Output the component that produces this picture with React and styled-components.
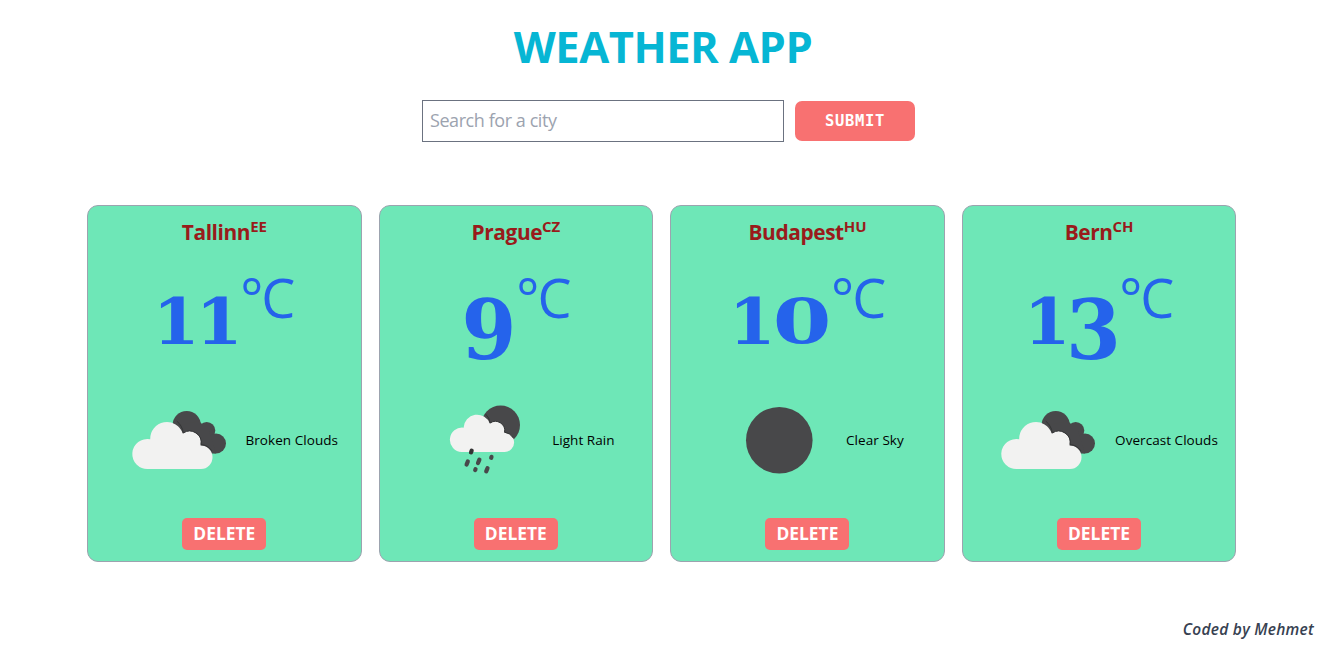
import React from "react";
import styled, { createGlobalStyle } from "styled-components";

const GlobalStyle = createGlobalStyle`
  *, *::before, *::after { box-sizing: border-box; }
  body {
    margin: 0;
    background: #fff;
    font-family: "Segoe UI", "Open Sans", "Noto Sans", sans-serif;
  }
`;

const Page = styled.div`
  height: 649px;
  padding: 19px 17px 0 0;
  display: flex;
  flex-direction: column;
  overflow: hidden;
`;

const Title = styled.h1`
  margin: 0;
  height: 56px;
  line-height: 56px;
  text-align: center;
  font-size: 43.5px;
  font-weight: 700;
  letter-spacing: -0.5px;
  color: #06b6d4;
  white-space: nowrap;
`;

const SearchForm = styled.form`
  display: flex;
  align-items: center;
  gap: 11px;
  height: 42px;
  margin: 25px 0 0 422px;
`;

const SearchInput = styled.input`
  width: 362px;
  height: 42px;
  padding: 0 7px 2px;
  border: 1px solid #6b7280;
  border-radius: 0;
  outline: none;
  font-family: inherit;
  font-size: 18px;
  letter-spacing: -0.43px;
  &::placeholder { color: #9ca3af; opacity: 1; }
`;

const SubmitButton = styled.button`
  width: 120px;
  height: 40px;
  padding: 0;
  border: 0;
  border-radius: 7px;
  background: #f87171;
  color: #fff;
  font-family: "DejaVu Sans Mono", monospace;
  font-size: 15.5px;
  font-weight: 700;
  letter-spacing: 0.67px;
`;

const CardGrid = styled.main`
  display: grid;
  grid-template-columns: repeat(4, 1fr);
  gap: 17px;
  width: 1149.3px;
  margin: 63px 0 0 87px;
`;

const Card = styled.article`
  height: 357px;
  display: flex;
  flex-direction: column;
  align-items: center;
  background: #6ee7b7;
  border: 1px solid #9ca3af;
  border-radius: 11px;
`;

const City = styled.h2`
  display: flex;
  margin: 10px 0 0;
  height: 32px;
  line-height: 32px;
  font-size: 20.9px;
  font-weight: 700;
  letter-spacing: -0.42px;
  color: #991b1b;
`;

const Country = styled.span`
  margin: -6px 0 0;
  font-size: 15px;
  font-weight: 700;
  letter-spacing: -0.1px;
`;

const Temperature = styled.div`
  display: flex;
  height: 109px;
  margin-top: 17px;
  color: #2563eb;
`;

const Digit = styled.span`
  display: flex;
  justify-content: center;
  width: ${(p) => p.$width}px;
  height: 100px;
  line-height: 100px;
  margin-top: ${(p) => p.$drop}px;
  font-family: "DejaVu Serif", serif;
  font-size: ${(p) => p.$size}px;
  font-weight: 700;
  transform: scaleX(${(p) => p.$stretch});
`;

const Unit = styled.span`
  height: 76px;
  margin: -6px 0 0;
  line-height: 76px;
  font-size: 54px;
  font-weight: 400;
  letter-spacing: -2px;
`;

const Conditions = styled.div`
  display: flex;
  align-items: center;
  height: 135px;
  margin-top: -1px;
`;

const Description = styled.span`
  margin-top: -2px;
  font-size: 13.5px;
  letter-spacing: 0.05px;
  color: #000;
  white-space: nowrap;
`;

const WeatherIcon = styled.svg`
  width: 135px;
  height: 135px;
  flex: none;
`;

const DeleteButton = styled.button`
  width: 84px;
  height: 32px;
  margin-top: 10px;
  padding: 0 0 2px;
  border: 0;
  border-radius: 5px;
  background: #f87171;
  color: #fff;
  font-family: inherit;
  font-size: 17.4px;
  font-weight: 700;
`;

const Footer = styled.footer`
  margin: 54px 12px 0 0;
  height: 26px;
  line-height: 26px;
  text-align: right;
  font-size: 15.5px;
  font-style: italic;
  font-weight: 600;
  letter-spacing: 0.24px;
  color: #374151;
`;

const CloudsIcon = () => (
  <WeatherIcon viewBox="0 0 135 135">
    <g fill="#48484a">
      <circle cx="75.7" cy="52" r="14" />
      <circle cx="95.7" cy="57.6" r="8.6" />
      <circle cx="105" cy="70.5" r="10" />
      <path d="M70 52L88 48L98 58L105 80.5H85L70 66Z" />
    </g>
    <path
      fill="#f2f2f1"
      d="M37 96A15 15 0 1 1 39.2 66.3A16.7 16.7 0 0 1 71.8 60.6A11.3 11.3 0 0 1 89.5 72.5A11.75 11.75 0 0 1 90 96Z"
    />
    <path
      fill="none"
      stroke="#343536"
      strokeWidth="1"
      d="M65.8 48.2Q71.3 52.5 72.3 60A11.5 11.5 0 0 1 90 71.6Q96.5 71.8 100.8 77.8"
    />
  </WeatherIcon>
);

const RainIcon = () => (
  <WeatherIcon viewBox="0 0 135 135">
    <circle cx="83.6" cy="52" r="19.4" fill="#48484a" />
    <path
      fill="#f2f2f1"
      d="M44.7 79A12.2 12.2 0 1 1 46.6 54.7A13.5 13.5 0 0 1 72.8 50.6A9 9 0 0 1 87.3 59.8A9.6 9.6 0 0 1 87.7 79Z"
    />
    <path
      fill="none"
      stroke="#343536"
      strokeWidth="1"
      d="M68.5 41Q72.5 44.5 73.2 50A9.3 9.3 0 0 1 87.6 59.2Q93 60 96 64.5"
    />
    <g stroke="#48484a" strokeWidth="4.2" strokeLinecap="round">
      <path d="M54.7 77.6L54 79.4" stroke="#333" />
      <path d="M50.8 88.5L49.6 91.6" />
      <path d="M62.4 86.6L61 90" />
      <path d="M74.5 83.8L74.2 84.8" />
      <path d="M58.5 96.3L58.2 97" />
      <path d="M70.5 95.2L69.2 98.4" />
    </g>
  </WeatherIcon>
);

const MoonIcon = () => (
  <WeatherIcon viewBox="0 0 135 135">
    <circle cx="68.3" cy="67.2" r="33.3" fill="#48484a" />
  </WeatherIcon>
);

const digitShapes = {
  0: { width: 58, size: 62, drop: 7, stretch: 1.36 },
  1: { width: 42.5, size: 63.5, drop: 7, stretch: 1.06 },
  3: { width: 51, size: 83, drop: 15, stretch: 0.95 },
  9: { width: 54, size: 83, drop: 15, stretch: 0.95 },
};

const cities = [
  { name: "Tallinn", country: "EE", temp: "11", text: "Broken Clouds", Icon: CloudsIcon },
  { name: "Prague", country: "CZ", temp: "9", text: "Light Rain", Icon: RainIcon },
  { name: "Budapest", country: "HU", temp: "10", text: "Clear Sky", Icon: MoonIcon },
  { name: "Bern", country: "CH", temp: "13", text: "Overcast Clouds", Icon: CloudsIcon },
];

export default function App() {
  return (
    <>
      <GlobalStyle />
      <Page>
        <Title>WEATHER APP</Title>
        <SearchForm onSubmit={(e) => e.preventDefault()}>
          <SearchInput placeholder="Search for a city" />
          <SubmitButton type="submit">SUBMIT</SubmitButton>
        </SearchForm>
        <CardGrid>
          {cities.map(({ name, country, temp, text, Icon }) => (
            <Card key={name}>
              <City>
                {name}
                <Country>{country}</Country>
              </City>
              <Temperature>
                {temp.split("").map((d, i) => {
                  const s = digitShapes[d];
                  return (
                    <Digit key={i} $width={s.width} $size={s.size} $drop={s.drop} $stretch={s.stretch}>
                      {d}
                    </Digit>
                  );
                })}
                <Unit>°C</Unit>
              </Temperature>
              <Conditions>
                <Icon />
                <Description>{text}</Description>
              </Conditions>
              <DeleteButton type="button">DELETE</DeleteButton>
            </Card>
          ))}
        </CardGrid>
        <Footer>Coded by Mehmet</Footer>
      </Page>
    </>
  );
}
